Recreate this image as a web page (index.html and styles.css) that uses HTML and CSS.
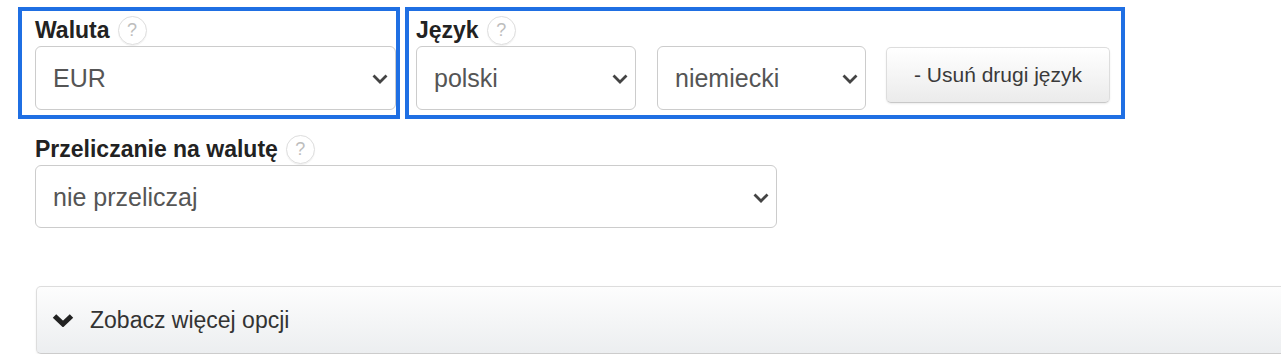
FILE: index.html
```html
<!DOCTYPE html>
<html lang="pl">
<head>
  <meta charset="UTF-8" />
  <title>Ustawienia</title>
  <link rel="stylesheet" href="styles.css">
</head>
<body>
  <div class="page">
    <div class="row-top">
      <div class="field hl hl-currency">
        <div class="label">Waluta <span class="help">?</span></div>
        <div class="select-wrap w-currency">
          <select><option>EUR</option></select>
          <svg class="caret" viewBox="0 0 16 10"><polyline points="1.5,1.5 8,8 14.5,1.5" /></svg>
        </div>
      </div>
      <div class="field hl hl-lang">
        <div class="label">Język <span class="help">?</span></div>
        <div class="lang-row">
          <div class="select-wrap w-lang1">
            <select><option>polski</option></select>
            <svg class="caret" viewBox="0 0 16 10"><polyline points="1.5,1.5 8,8 14.5,1.5" /></svg>
          </div>
          <div class="select-wrap w-lang2">
            <select><option>niemiecki</option></select>
            <svg class="caret" viewBox="0 0 16 10"><polyline points="1.5,1.5 8,8 14.5,1.5" /></svg>
          </div>
          <button class="btn">- Usuń drugi język</button>
        </div>
      </div>
    </div>

    <div class="field plain">
      <div class="label">Przeliczanie na walutę <span class="help">?</span></div>
      <div class="select-wrap w-convert">
        <select><option>nie przeliczaj</option></select>
        <svg class="caret" viewBox="0 0 16 10"><polyline points="1.5,1.5 8,8 14.5,1.5" /></svg>
      </div>
    </div>

    <div class="more">
      <svg class="more-icon" viewBox="0 0 22 14"><polyline points="2.5,3 11,11 19.5,3" /></svg>
      <span>Zobacz więcej opcji</span>
    </div>
  </div>
</body>
</html>
```

FILE: styles.css
```css
* {
  box-sizing: border-box;
}

body {
  margin: 0;
  background: #fff;
  font-family: "Liberation Sans", Arial, sans-serif;
  color: #222;
  overflow: hidden;
}

.page {
  padding: 7px 0 0 18px;
}

.row-top {
  display: flex;
  gap: 5px;
}

.hl {
  border: 4px solid #1f6fe3;
  padding-bottom: 5px;
}

.hl-currency {
  width: 382px;
  padding-left: 13px;
}

.hl-lang {
  width: 720px;
  padding-left: 7px;
}

.hl .label {
  padding-top: 3px;
}

.plain {
  margin-top: 10px;
  padding-left: 17px;
}

.label {
  display: flex;
  align-items: center;
  gap: 8px;
  padding-top: 4px;
  line-height: 32px;
  font-size: 23px;
  font-weight: bold;
  color: #222;
}

.help {
  width: 29px;
  height: 29px;
  border: 1px solid #ddd;
  border-radius: 50%;
  display: flex;
  align-items: center;
  justify-content: center;
  font-size: 18px;
  font-weight: normal;
  color: #bdbdbd;
  box-shadow: 0 1px 1px rgba(0,0,0,0.06);
}

.lang-row {
  display: flex;
  align-items: flex-start;
}

.select-wrap {
  position: relative;
  height: 64px;
}

.select-wrap select {
  appearance: none;
  -webkit-appearance: none;
  width: 100%;
  height: 100%;
  border: 1px solid #ccc;
  border-radius: 6px;
  background: #fff;
  padding: 0 0 0 17px;
  font-family: "Liberation Sans", Arial, sans-serif;
  font-size: 25px;
  color: #555;
  outline: none;
}

.caret {
  position: absolute;
  right: 8px;
  top: 50%;
  width: 16px;
  height: 10px;
  margin-top: -4px;
  fill: none;
  stroke: #444;
  stroke-width: 2.8;
}

.w-currency { width: 361px; }
.w-lang1 { width: 220px; margin-right: 21px; }
.w-lang2 { width: 209px; margin-right: 20px; }
.w-convert { width: 742px; height: 63px; }

.btn {
  width: 224px;
  height: 56px;
  margin-top: 1px;
  border: 1px solid #ddd;
  border-bottom-color: #c8c8c8;
  border-radius: 5px;
  background: linear-gradient(#fff, #ebebeb);
  box-shadow: 0 1px 2px rgba(0,0,0,0.08);
  font-family: "Liberation Sans", Arial, sans-serif;
  font-size: 21px;
  color: #3a3a3a;
  cursor: pointer;
}

.more {
  display: flex;
  align-items: center;
  gap: 16px;
  width: 1260px;
  height: 68px;
  margin: 58px 0 0 18px;
  padding-left: 15px;
  border: 1px solid #ddd;
  border-bottom-color: #ccc;
  border-radius: 5px;
  background: linear-gradient(#fdfdfd, #eceef0);
  box-shadow: 0 1px 2px rgba(0,0,0,0.08);
  font-size: 23px;
  color: #333;
}

.more-icon {
  width: 22px;
  height: 14px;
  fill: none;
  stroke: #222;
  stroke-width: 5;
}
```
